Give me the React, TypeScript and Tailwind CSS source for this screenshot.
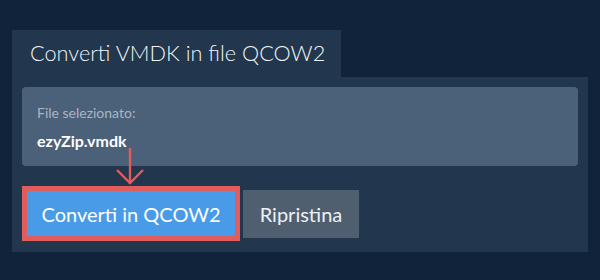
export default function App() {
  return (
    <div
      className="min-h-[280px] w-[600px] bg-[#10233a] pl-3 pt-[30px]"
      style={{ fontFamily: "Lato, 'Open Sans', sans-serif" }}
    >
      <div className="flex h-[47px] w-[329px] items-center bg-[#22364d] pl-[18px]">
        <h1 className="whitespace-nowrap text-[21.7px] font-light leading-none text-[#f1f4f7]">
          Converti VMDK in file QCOW2
        </h1>
      </div>
      <div className="relative w-[576px] bg-[#22364d] px-[10px] pb-[11px] pt-[10px]">
        <div className="h-[79px] rounded-[4px] bg-[#4b6079] px-[15px] pt-[16px]">
          <div className="text-[14px] leading-[20px] text-[#a9b6c5]">File selezionato:</div>
          <div className="mt-[8px] text-[16px] font-bold leading-[20px] text-white">ezyZip.vmdk</div>
        </div>
        <svg
          className="absolute left-[101px] top-[71px]"
          width="34"
          height="38"
          viewBox="0 0 34 38"
          fill="none"
          stroke="#e05d5d"
          strokeWidth="2.4"
        >
          <path d="M17 0 V36" />
          <path d="M4 22 L17 35 L30 22" />
        </svg>
        <div className="mt-[20px] flex items-center gap-[3px]">
          <div className="border-[5px] border-[#e05d5d]">
            <button className="flex h-[45px] w-[208px] items-center justify-center bg-[#4a9be7] text-[20px] text-white">
              Converti in QCOW2
            </button>
          </div>
          <button className="flex h-[48px] w-[116px] items-center justify-center bg-[#4f5f70] text-[20px] text-[#eef1f4]">
            Ripristina
          </button>
        </div>
      </div>
    </div>
  );
}
